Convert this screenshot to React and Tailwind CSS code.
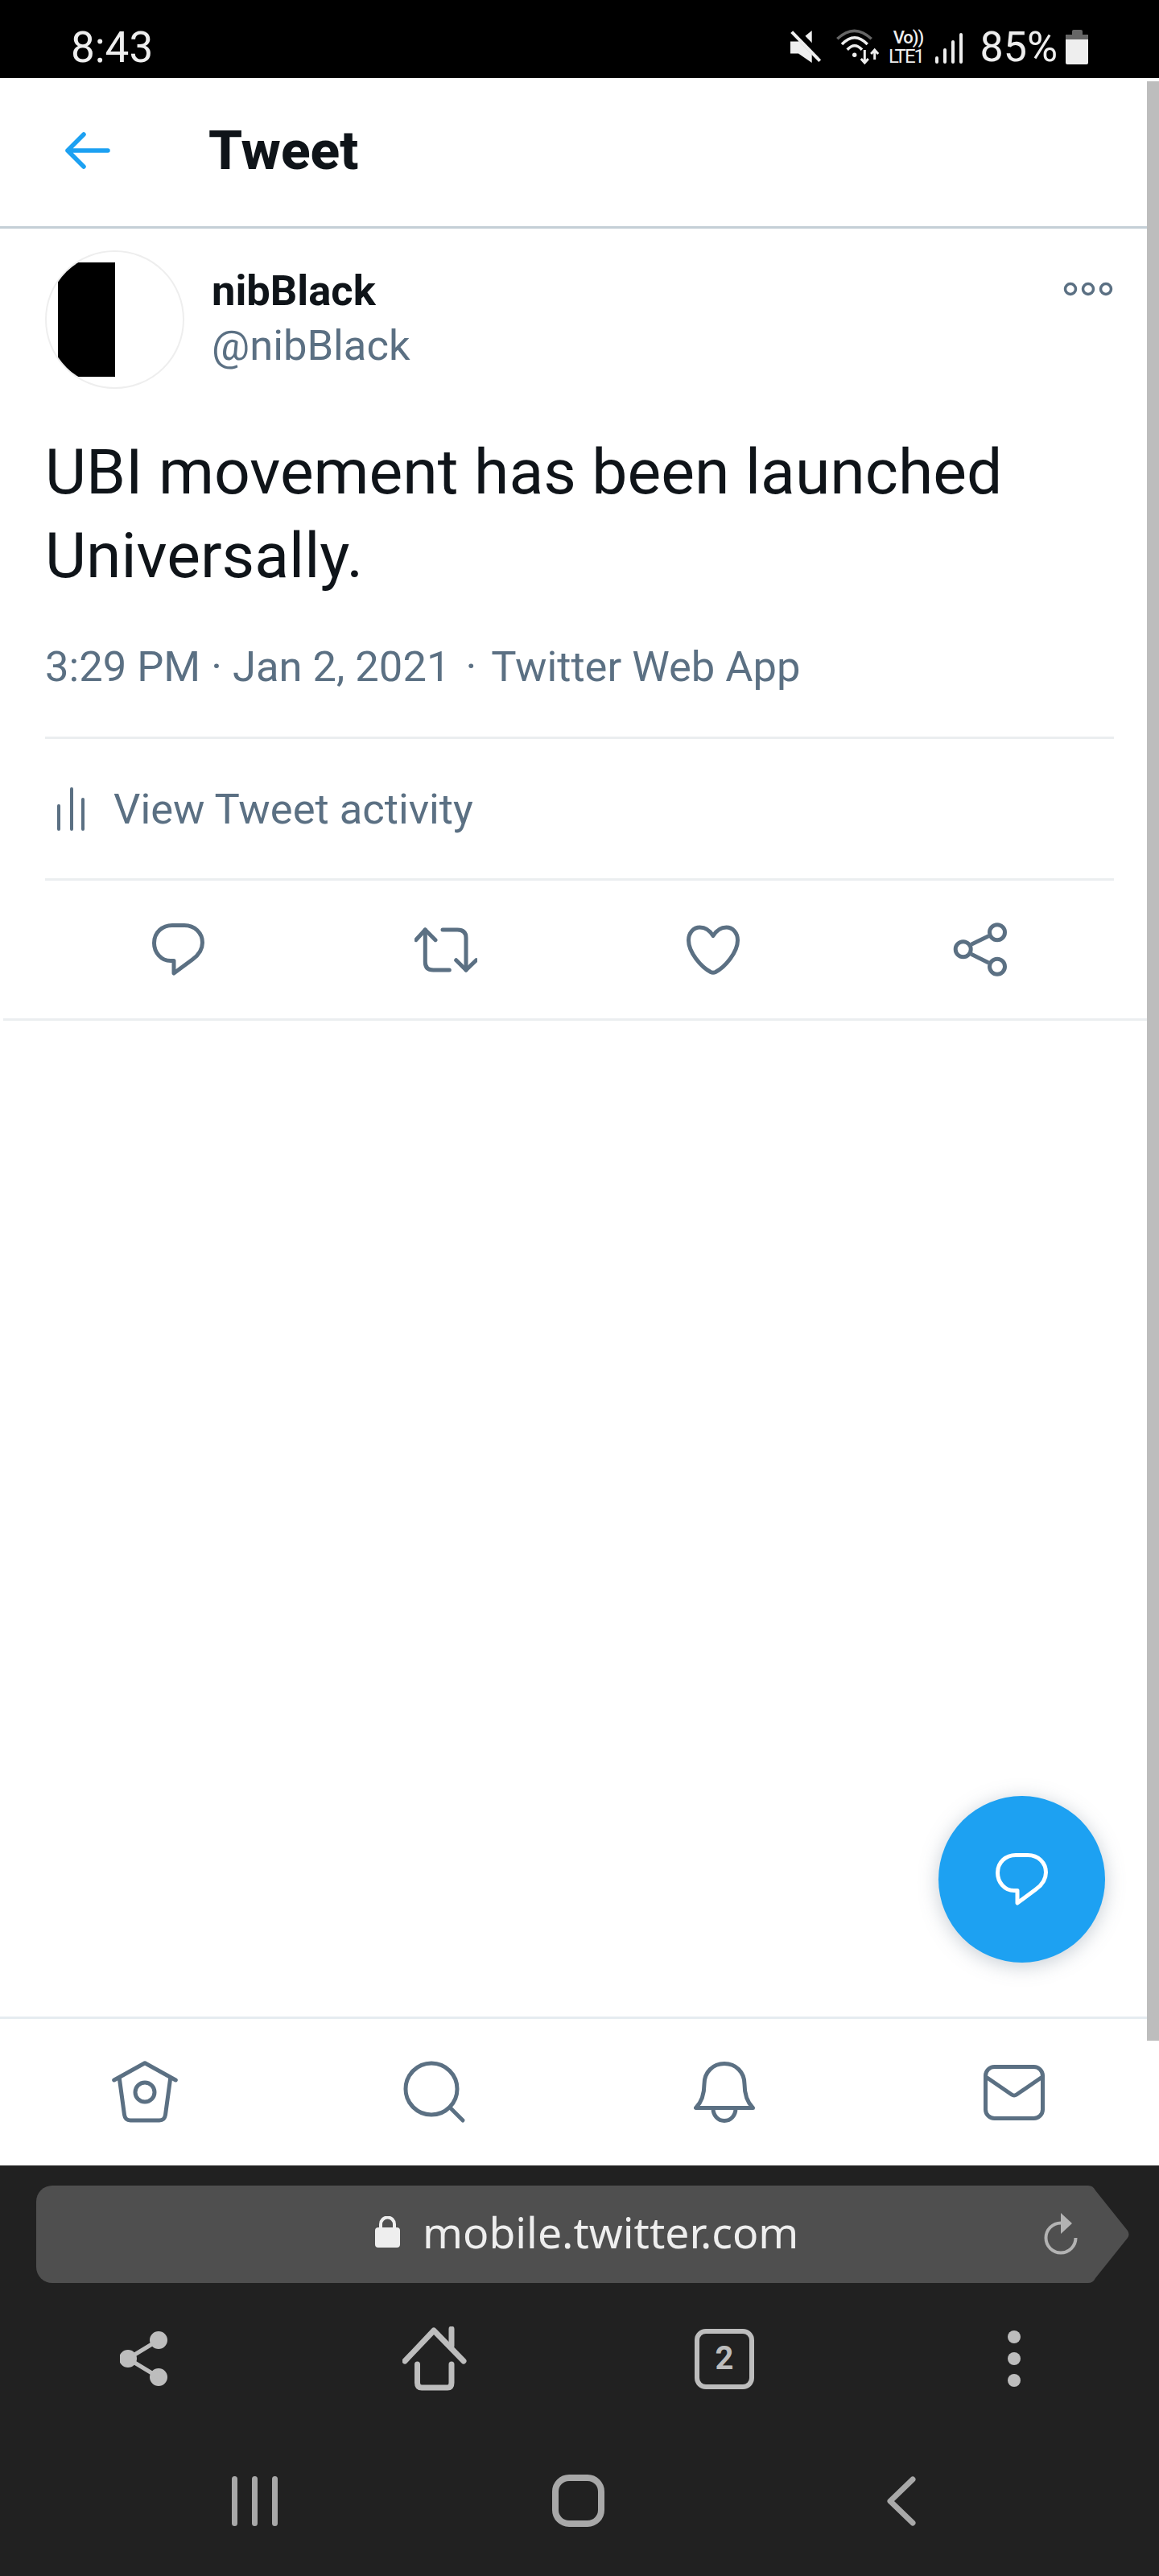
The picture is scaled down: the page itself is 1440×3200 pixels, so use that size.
import React from "react";

const SLATE = "#5b7083";

function CommentIcon({ color = SLATE }) {
  return (
    <svg width="66" height="66" viewBox="0 0 66 66" fill="none" stroke={color} strokeWidth="5" strokeLinejoin="round">
      <path d="M27 62V46.5H23C11 46.5 2.5 36 2.5 24.5C2.5 11 13 2.5 25 2.5H40C53 2.5 62.5 12 62.5 24C62.5 33 57 40 50 45Z" />
    </svg>
  );
}

function RetweetIcon() {
  return (
    <svg width="78" height="56" viewBox="0 0 78 56" fill="none" stroke={SLATE} strokeWidth="5" strokeLinecap="round" strokeLinejoin="round">
      <path d="M1.7 15.7L13.3 3L26 15.7" />
      <path d="M13.3 3V43Q13.3 53 23.3 53H43.3" />
      <path d="M35 3H53.3Q64 3 64 13V53" />
      <path d="M51.7 40.7L64 53L76.7 40.7" />
    </svg>
  );
}

function HeartIcon() {
  return (
    <svg width="66" height="62" viewBox="0 0 66 62" fill="none" stroke={SLATE} strokeWidth="5" strokeLinejoin="round">
      <path d="M33 13.5C29 7 23 3 16.5 3C8.5 3 2.5 10 2.5 19C2.5 34 18 52 30 58.5C32 59.5 34 59.5 36 58.5C48 52 63.5 34 63.5 19C63.5 10 57.5 3 49.5 3C43 3 37 7 33 13.5Z" />
    </svg>
  );
}

function ShareIcon() {
  return (
    <svg width="70" height="70" viewBox="0 0 70 70" fill="none" stroke={SLATE} strokeWidth="5">
      <circle cx="56" cy="13.3" r="9.5" />
      <circle cx="13.7" cy="34.3" r="9.5" />
      <circle cx="56" cy="55.7" r="9.5" />
      <path d="M23.7 28.3L45.3 17.7M23.7 40.3L45.3 51" />
    </svg>
  );
}

function HomeIcon() {
  return (
    <svg width="82" height="78" viewBox="0 0 82 78" fill="none" stroke={SLATE} strokeWidth="5" strokeLinecap="round" strokeLinejoin="round">
      <path d="M2.7 24L41 2.7L79.3 24" />
      <path d="M9.3 21.6L15.5 67Q16.5 74 23 74H59Q65.5 74 66.5 67L72.7 21.6" />
      <circle cx="41" cy="39" r="12" />
    </svg>
  );
}

function SearchIcon() {
  return (
    <svg width="80" height="80" viewBox="0 0 80 80" fill="none" stroke={SLATE} strokeWidth="5" strokeLinecap="round">
      <circle cx="36" cy="36" r="32" />
      <path d="M60 60L75 75" />
    </svg>
  );
}

function BellIcon() {
  return (
    <svg width="76" height="76" viewBox="0 0 76 76" fill="none" stroke={SLATE} strokeWidth="5" strokeLinejoin="round">
      <path d="M2.5 57.5H73.5C66 50 63 40 63 28C63 13 52 2.5 38 2.5C24 2.5 13 13 13 28C13 40 10 50 2.5 57.5Z" />
      <path d="M24 58C24 67 30 73.5 38 73.5C46 73.5 52 67 52 58" />
    </svg>
  );
}

function MailIcon() {
  return (
    <svg width="76" height="69" viewBox="0 0 76 69" fill="none" stroke={SLATE} strokeWidth="5" strokeLinejoin="round">
      <rect x="2.5" y="2.5" width="71" height="64" rx="11" />
      <path d="M3 15L35 37Q38 39 41 37L73 15" />
    </svg>
  );
}

function StatusBar() {
  return (
    <div className="h-[97px] bg-black flex items-start text-[#eeeeee]">
      <div className="ml-[88px] mt-[29px] text-[53px] leading-[60px]">8:43</div>
      <div className="ml-auto mr-[88px] mt-[35px] flex items-start">
        {/* mute */}
        <svg width="38" height="42" viewBox="0 0 38 42" className="mt-[3px]">
          <path d="M0 13.4H10L26.7 0V40L10 28.4H0Z" fill="#eeeeee" />
          <path d="M1.7 1.7L36.7 37.7" stroke="#000" strokeWidth="10" transform="translate(2 -3)" />
          <path d="M1.7 1.7L36.7 37.7" stroke="#eeeeee" strokeWidth="4" />
        </svg>
        {/* wifi */}
        <svg width="56" height="46" viewBox="0 0 56 46" className="ml-[16px]" fill="none" stroke="#eeeeee" strokeWidth="3.5">
          <path d="M4.3 13.3Q25.5 -6.7 46.7 13.3" stroke="#666666" />
          <path d="M10 20Q25.8 3.3 41.7 20" />
          <path d="M16.7 26.7Q25.8 16.7 35 26.7" />
          <circle cx="25.7" cy="33.3" r="2.7" fill="#eeeeee" stroke="none" />
          <path d="M38.3 27V43M33.8 38L38.3 43L42.8 38M50.7 39V27M46.2 32L50.7 27L55.2 32" strokeWidth="3" />
        </svg>
        <div className="ml-[8px] w-[50px] flex flex-col items-center text-[#eeeeee] font-medium">
          <div className="text-[22px] leading-[22px] tracking-[-1px] pl-[6px] mt-[1px]">Vo))</div>
          <div className="text-[24px] leading-[24px] tracking-[-2px] font-normal">LTE1</div>
        </div>
        <div className="ml-[12px] mt-[6px] h-[38px] flex items-end gap-[6px]">
          <div className="w-[4px] h-[9px] rounded-full bg-[#eeeeee]" />
          <div className="w-[4px] h-[19px] rounded-full bg-[#eeeeee]" />
          <div className="w-[4px] h-[29px] rounded-full bg-[#eeeeee]" />
          <div className="w-[4px] h-[38px] rounded-full bg-[#eeeeee]" />
        </div>
        <div className="ml-[21px] mt-[-1px] text-[52px] leading-[50px]">85%</div>
        <div className="ml-[10px] mt-[2px] w-[28px] flex flex-col items-center">
          <div className="w-[13px] h-[6px] bg-[#666666] rounded-t-[2px]" />
          <div className="w-[28px] h-[37px] rounded-[2px] bg-[#eeeeee] overflow-hidden">
            <div className="h-[6px] bg-[#666666]" />
          </div>
        </div>
      </div>
    </div>
  );
}

function TweetHeader() {
  return (
    <div className="h-[187px] pb-[4px] border-b-[3px] border-[#c4cfd6] flex items-center">
      <svg width="56" height="46" viewBox="0 0 56 46" className="ml-[81px]" fill="none" stroke="#1da1f2" strokeWidth="5.5" strokeLinecap="round" strokeLinejoin="round">
        <path d="M3 23H53M23 3L3 23L23 43" />
      </svg>
      <h1 className="ml-[122px] text-[67.5px] leading-[80px] font-extrabold text-[#0f1419]">Tweet</h1>
    </div>
  );
}

function Tweet() {
  return (
    <div>
      <div className="mx-[56px] pt-[27px] flex">
        <div className="relative w-[173px] h-[172px] rounded-full border-[2px] border-[#eeeeee] overflow-hidden bg-white shrink-0">
          <div className="absolute left-[14px] top-[13px] w-[71px] h-[142px] bg-black" />
        </div>
        <div className="ml-[34px] mt-[16px]">
          <div className="text-[52.5px] leading-[68px] font-bold text-[#0f1419]">nibBlack</div>
          <div className="text-[52.5px] leading-[68px] text-[#5b7083]">@nibBlack</div>
        </div>
        <svg width="62" height="18" viewBox="0 0 62 18" className="ml-auto mt-[39px] mr-[1px]" fill="none" stroke="#5b7083" strokeWidth="3.5">
          <circle cx="9" cy="9" r="6.5" />
          <circle cx="31" cy="9" r="6.5" />
          <circle cx="53" cy="9" r="6.5" />
        </svg>
      </div>
      <p className="mx-[56px] mt-[51px] text-[78.7px] leading-[104px] text-[#0f1419]">
        UBI movement has been launched
        <br />
        Universally.
      </p>
      <div className="mx-[56px] mt-[56px] text-[52.5px] leading-[60px] text-[#5b7083]">
        3:29 PM · Jan 2, 2021 <span className="mx-[6px]">·</span> Twitter Web App
      </div>
      <div className="mx-[56px] mt-[57px] h-[3px] bg-[#ebeef0]" />
      <div className="mx-[56px] h-[173px] flex items-center">
        <svg width="36" height="54" viewBox="0 0 36 54" className="ml-[15px]" fill="#5b7083">
          <rect x="0" y="21" width="4" height="33" rx="2" />
          <rect x="16" y="0" width="4" height="54" rx="2" />
          <rect x="30" y="13" width="4" height="41" rx="2" />
        </svg>
        <span className="ml-[34px] text-[52.5px] leading-[60px] text-[#5b7083]">View Tweet activity</span>
      </div>
      <div className="mx-[56px] h-[3px] bg-[#ebeef0]" />
      <div className="mx-[56px] h-[171px] grid grid-cols-4 items-center justify-items-center">
        <CommentIcon />
        <RetweetIcon />
        <HeartIcon />
        <ShareIcon />
      </div>
      <div className="mx-[4px] h-[3px] bg-[#ebeef0]" />
    </div>
  );
}

function BrowserChrome() {
  return (
    <div className="h-[510px] bg-[#212121] text-[#bdbdbd]">
      <div className="pt-[25px] pl-[45px] flex">
        <div className="w-[1305px] h-[121px] bg-[#4f4f4f] rounded-l-[20px] flex items-center pl-[421px]">
          <svg width="31" height="39" viewBox="0 0 31 39" fill="#eeeeee" className="mb-[6px]">
            <rect x="0" y="14" width="31" height="25" rx="4" />
            <path d="M7 16V10a8.5 8.5 0 0 1 17 0V16" fill="none" stroke="#eeeeee" strokeWidth="4" />
          </svg>
          <span className="ml-[28px] mb-[5px] text-[53.5px] leading-[64px] text-[#eeeeee] font-['Noto_Sans',sans-serif]">mobile.twitter.com</span>
          <svg width="44" height="52" viewBox="0 0 44 52" className="ml-auto mr-[9px] mb-[2px]" fill="none" stroke="#b3b3b3" strokeWidth="4">
            <path d="M21 12.5A18.5 18.5 0 1 0 39.5 31" />
            <path d="M21 0L35 13L21 26Z" fill="#b3b3b3" stroke="none" />
          </svg>
        </div>
        <svg width="53" height="121" viewBox="0 0 53 121" fill="#4f4f4f">
          <path d="M0 0H2Q8 0 11 6L51 56Q54 60.5 51 65L11 115Q8 121 2 121H0Z" />
        </svg>
      </div>
      <div className="mt-[50px] h-[88px] grid grid-cols-4 items-center justify-items-center">
        <svg width="62" height="68" viewBox="0 0 62 68" fill="#bdbdbd" stroke="#bdbdbd" strokeWidth="5">
          <circle cx="48" cy="11" r="8.5" />
          <circle cx="10" cy="34" r="8.5" />
          <circle cx="48" cy="57" r="8.5" />
          <path d="M10 34L48 11M10 34L48 57" />
        </svg>
        <svg width="80" height="80" viewBox="0 0 80 80" fill="none" stroke="#bdbdbd" strokeWidth="7" strokeLinecap="round" strokeLinejoin="round">
          <path d="M3 43L39 5L76 43" />
          <path d="M61 3V24" />
          <path d="M18.5 47V70Q18.5 76 24 76H56Q61 76 61 70V47" />
        </svg>
        <div className="w-[74px] h-[75px] rounded-[14px] border-[6px] border-[#bdbdbd] flex items-center justify-center text-[40px] leading-[40px] font-bold">
          2
        </div>
        <div className="flex flex-col gap-[11px]">
          <div className="w-[16px] h-[16px] rounded-full bg-[#bdbdbd]" />
          <div className="w-[16px] h-[16px] rounded-full bg-[#bdbdbd]" />
          <div className="w-[16px] h-[16px] rounded-full bg-[#bdbdbd]" />
        </div>
      </div>
      <div className="mt-[100px] pl-[115px] grid grid-cols-[repeat(3,402px)] items-center justify-items-center">
        <div className="flex gap-[18px]">
          <div className="w-[7px] h-[62px] rounded-full bg-[#a8a8a8]" />
          <div className="w-[7px] h-[62px] rounded-full bg-[#a8a8a8]" />
          <div className="w-[7px] h-[62px] rounded-full bg-[#a8a8a8]" />
        </div>
        <div className="w-[65px] h-[65px] rounded-[21px] border-[8px] border-[#a8a8a8]" />
        <svg width="38" height="62" viewBox="0 0 38 62" fill="none" stroke="#a8a8a8" strokeWidth="7" strokeLinecap="round" strokeLinejoin="round">
          <path d="M33 4L5 31L33 58" />
        </svg>
      </div>
    </div>
  );
}

export default function App() {
  return (
    <div className="w-[1440px] h-[3200px] flex flex-col bg-white overflow-hidden font-[Roboto,sans-serif]">
      <StatusBar />
      <div className="relative flex-1 flex flex-col">
        <TweetHeader />
        <Tweet />
        <div className="flex-1" />
        <div className="h-[185px] border-t-[3px] border-[#e6ecf0] grid grid-cols-4 items-center justify-items-center">
          <HomeIcon />
          <SearchIcon />
          <BellIcon />
          <MailIcon />
        </div>
        <button className="absolute left-[1166px] top-[2134px] w-[207px] h-[207px] rounded-full bg-[#1da1f2] shadow-[0_4px_24px_rgba(91,112,131,0.35)] flex items-center justify-center">
          <CommentIcon color="#ffffff" />
        </button>
        <div className="absolute right-0 top-[4px] w-[15px] h-[2434px] bg-[#bdbdbd]" />
      </div>
      <BrowserChrome />
    </div>
  );
}
